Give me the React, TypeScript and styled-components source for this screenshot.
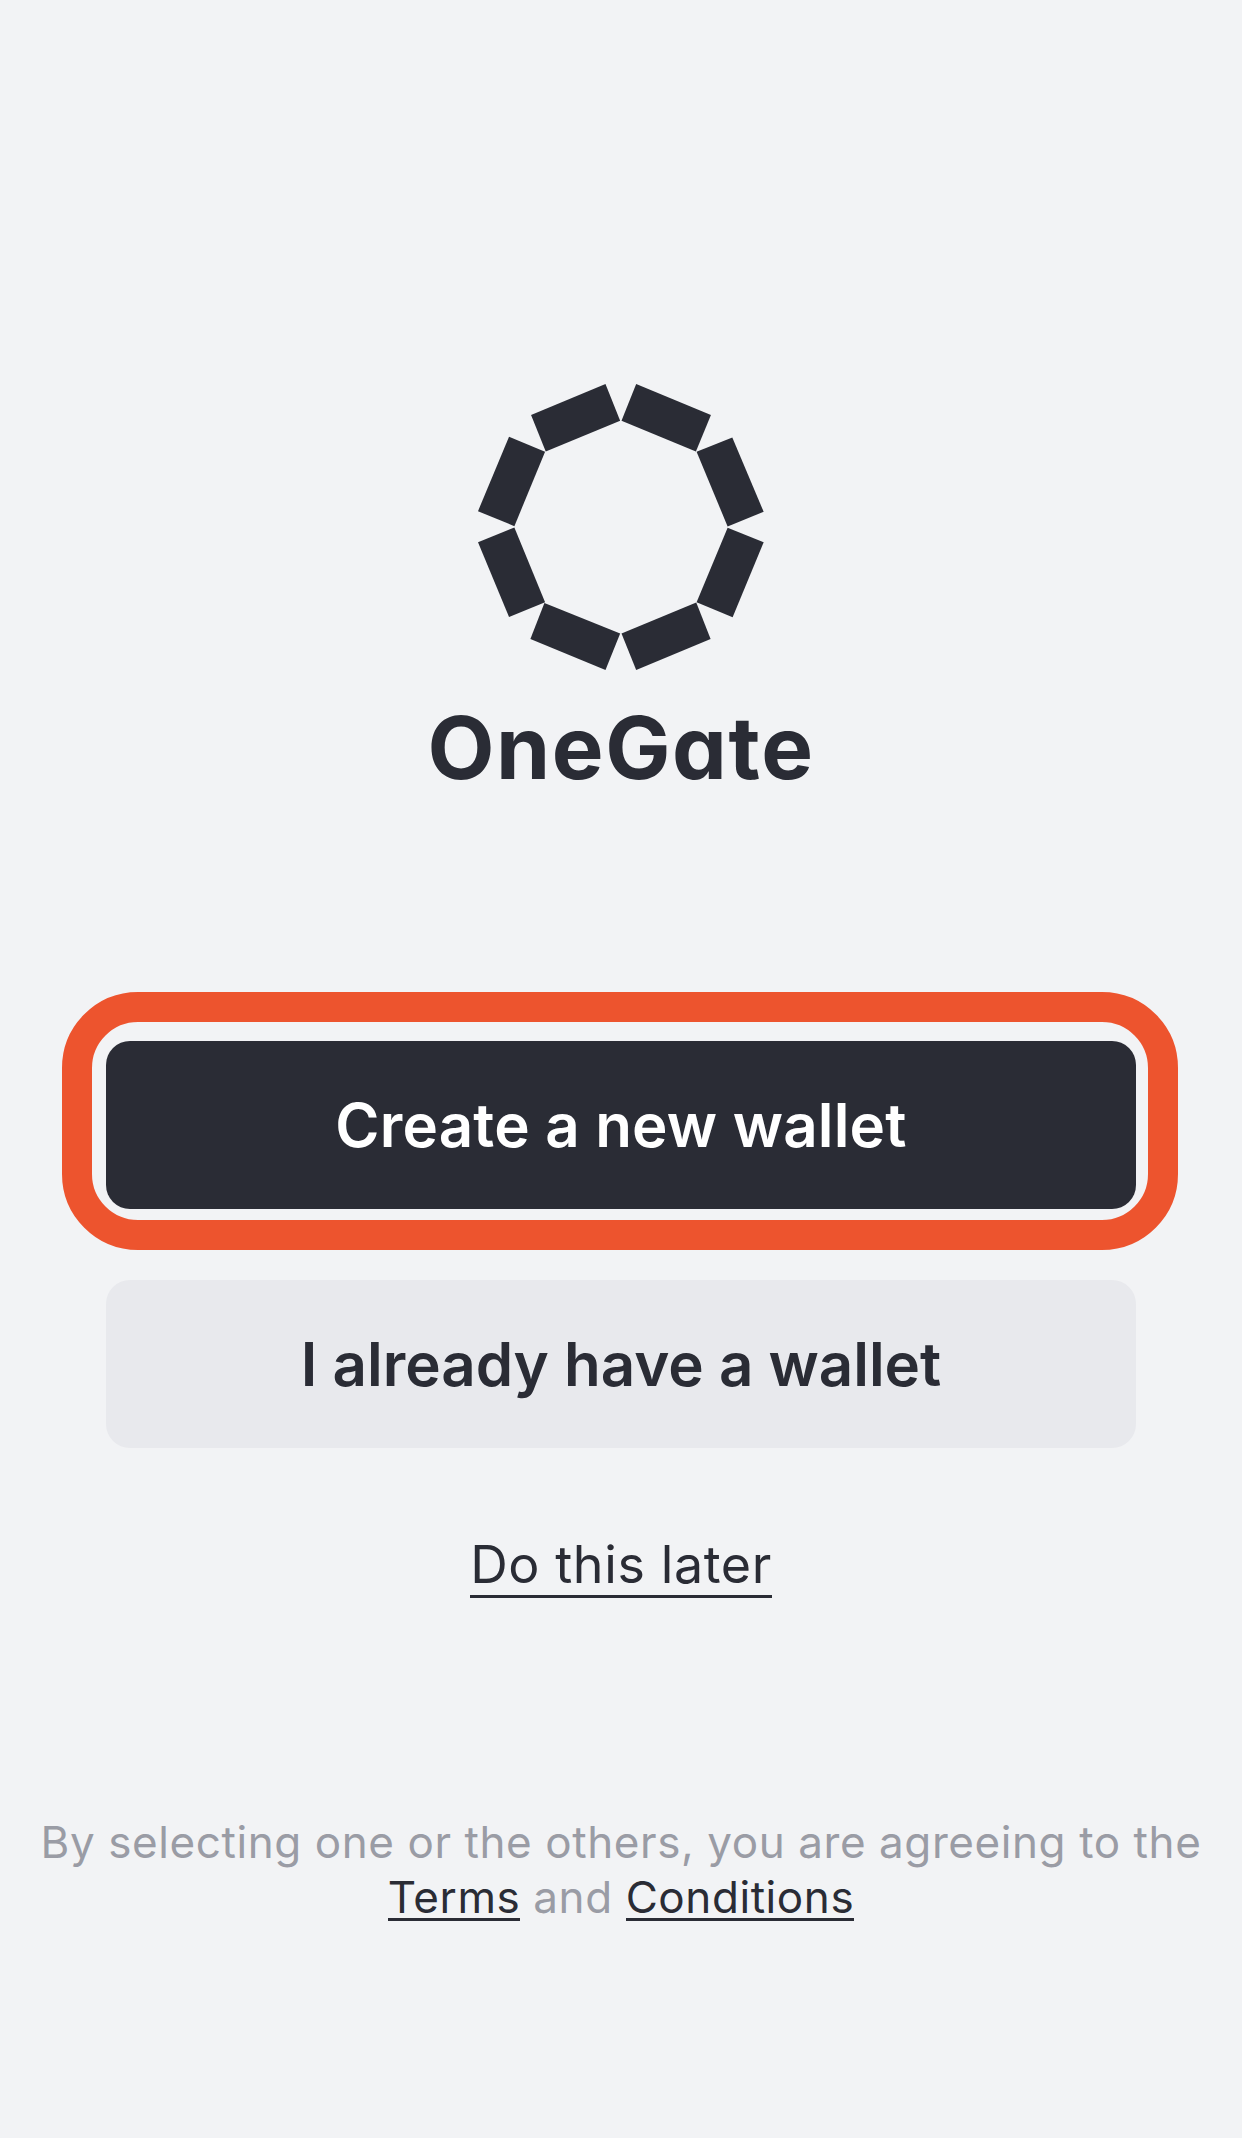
import React from "react";
import styled, { createGlobalStyle } from "styled-components";

const Global = createGlobalStyle`
  html, body { margin: 0; padding: 0; background: #f2f3f5; }
  * { box-sizing: border-box; }
`;

const Page = styled.main`
  width: 1242px;
  height: 2138px;
  background: #f2f3f5;
  color: #2a2c35;
  font-family: Inter, "Liberation Sans", sans-serif;
  display: flex;
  flex-direction: column;
  align-items: center;
  padding-top: 384px;
`;

const LogoMark = styled.svg`
  display: block;
  width: 286px;
  height: 286px;
  fill: #2a2c35;
`;

const Wordmark = styled.h1`
  margin: 30px 0 0;
  font-size: 87px;
  line-height: 96px;
  font-weight: 700;
  letter-spacing: 1.6px;
  font-feature-settings: "cv11" 1;
  color: #2a2c35;
`;

const Actions = styled.div`
  width: 1030px;
  margin-top: 245px;
  display: flex;
  flex-direction: column;
  gap: 71px;
`;

const Button = styled.button<{ $primary?: boolean }>`
  position: relative;
  display: block;
  width: 100%;
  height: 168px;
  border: 0;
  border-radius: 24px;
  font-family: inherit;
  font-size: 60px;
  font-weight: 600;
  letter-spacing: ${(p) => (p.$primary ? "0.2px" : "0")};
  background: ${(p) => (p.$primary ? "#2a2c35" : "#e8e9ed")};
  color: ${(p) => (p.$primary ? "#ffffff" : "#2a2c35")};
`;

const Highlight = styled.span`
  position: absolute;
  top: -49px;
  left: -44px;
  right: -42px;
  bottom: -41px;
  border: 30px solid #ed542e;
  border-radius: 76px;
  pointer-events: none;
`;

const Later = styled.a`
  margin-top: 87px;
  font-size: 52px;
  line-height: 60px;
  border-bottom: 3px solid #2a2c35;
  letter-spacing: 0.6px;
`;

const Legal = styled.p`
  margin: 217px 0 0;
  width: 1200px;
  text-align: center;
  font-size: 44px;
  line-height: 55px;
  letter-spacing: 0.58px;
  color: #9a9ca5;
`;

const LegalLink = styled.a`
  display: inline-block;
  line-height: 42px;
  color: #2a2c35;
  border-bottom: 3px solid #2a2c35;
`;

const segments = [
  "709,72 933,165 888,274 665,182",
  "617,72 394,165 438,274 661,182",
  "997,232 1091,455 983,499 890,275",
  "328,230 235,453 344,498 436,275",
  "983,503 1091,546 998,771 890,726",
  "344,502 235,546 328,770 436,726",
  "434,728 661,820 617,929 392,836",
  "665,820 889,727 932,836 709,929",
];

export default function App() {
  return (
    <Page>
      <Global />
      <LogoMark viewBox="235 72 857 857" aria-hidden="true">
        {segments.map((points) => (
          <polygon key={points} points={points} />
        ))}
      </LogoMark>
      <Wordmark>OneGate</Wordmark>
      <Actions>
        <Button $primary>
          Create a new wallet
          <Highlight />
        </Button>
        <Button>I already have a wallet</Button>
      </Actions>
      <Later>Do this later</Later>
      <Legal>
        By selecting one or the others, you are agreeing to the
        <br />
        <LegalLink>Terms</LegalLink> and <LegalLink>Conditions</LegalLink>
      </Legal>
    </Page>
  );
}
